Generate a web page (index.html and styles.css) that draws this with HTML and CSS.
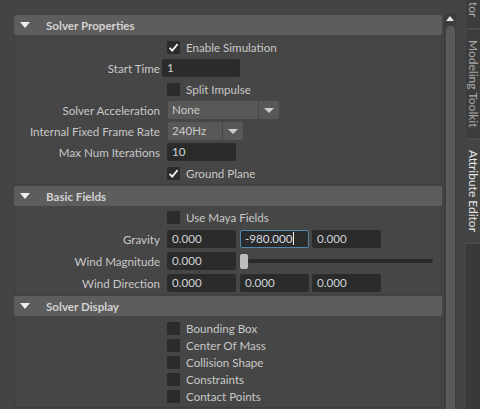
FILE: index.html
```html
<!DOCTYPE html>
<html lang="en">
<head>
    <meta charset="UTF-8">
    <title>Attribute Editor - Solver</title>
    <link rel="stylesheet" href="styles.css">
</head>
<body>
    <div class="workspace">
        <div class="editor">
            <section class="frame">
                <div class="frame-header"><span class="caret"></span>Solver Properties</div>
                <div class="frame-body">
                    <div class="row">
                        <span class="label"></span>
                        <div class="check on"><span class="box"><svg viewBox="0 0 13 13"><path d="M2.6 6.8 L5.2 9.6 L10.6 3.2"/></svg></span>Enable Simulation</div>
                    </div>
                    <div class="row">
                        <span class="label">Start Time</span>
                        <div class="field wide">1</div>
                    </div>
                    <div class="row">
                        <span class="label"></span>
                        <div class="check"><span class="box"></span>Split Impulse</div>
                    </div>
                    <div class="row">
                        <span class="label">Solver Acceleration</span>
                        <div class="combo">
                            <span class="combo-value long">None</span>
                            <span class="combo-arrow"></span>
                        </div>
                    </div>
                    <div class="row">
                        <span class="label">Internal Fixed Frame Rate</span>
                        <div class="combo">
                            <span class="combo-value">240Hz</span>
                            <span class="combo-arrow"></span>
                        </div>
                    </div>
                    <div class="row">
                        <span class="label">Max Num Iterations</span>
                        <div class="field">10</div>
                    </div>
                    <div class="row">
                        <span class="label"></span>
                        <div class="check on"><span class="box"><svg viewBox="0 0 13 13"><path d="M2.6 6.8 L5.2 9.6 L10.6 3.2"/></svg></span>Ground Plane</div>
                    </div>
                </div>
            </section>

            <section class="frame">
                <div class="frame-header"><span class="caret"></span>Basic Fields</div>
                <div class="frame-body fields">
                    <div class="row">
                        <span class="label"></span>
                        <div class="check"><span class="box"></span>Use Maya Fields</div>
                    </div>
                    <div class="row">
                        <span class="label">Gravity</span>
                        <div class="group">
                            <div class="field">0.000</div>
                            <div class="field focused">-980.000<span class="cursor"></span></div>
                            <div class="field">0.000</div>
                        </div>
                    </div>
                    <div class="row">
                        <span class="label">Wind Magnitude</span>
                        <div class="group">
                            <div class="field">0.000</div>
                            <div class="slider">
                                <span class="slider-thumb"></span>
                                <span class="slider-track"></span>
                            </div>
                        </div>
                    </div>
                    <div class="row">
                        <span class="label">Wind Direction</span>
                        <div class="group">
                            <div class="field">0.000</div>
                            <div class="field">0.000</div>
                            <div class="field">0.000</div>
                        </div>
                    </div>
                </div>
            </section>

            <section class="frame">
                <div class="frame-header"><span class="caret"></span>Solver Display</div>
                <div class="frame-body display">
                    <div class="row short">
                        <span class="label"></span>
                        <div class="check"><span class="box"></span>Bounding Box</div>
                    </div>
                    <div class="row short">
                        <span class="label"></span>
                        <div class="check"><span class="box"></span>Center Of Mass</div>
                    </div>
                    <div class="row short">
                        <span class="label"></span>
                        <div class="check"><span class="box"></span>Collision Shape</div>
                    </div>
                    <div class="row short">
                        <span class="label"></span>
                        <div class="check"><span class="box"></span>Constraints</div>
                    </div>
                    <div class="row short">
                        <span class="label"></span>
                        <div class="check"><span class="box"></span>Contact Points</div>
                    </div>
                </div>
            </section>
        </div>

        <div class="scrollbar">
            <span class="scroll-up"></span>
            <span class="scroll-thumb"></span>
        </div>

        <div class="dock">
            <div class="tab clipped"><span>tor</span></div>
            <div class="tab"><span>Modeling Toolkit</span></div>
            <div class="tab active"><span>Attribute Editor</span></div>
            <div class="tab-rest"></div>
        </div>
    </div>
</body>
</html>
```

FILE: styles.css
```css
* {
    margin: 0;
    padding: 0;
    box-sizing: border-box;
}

body {
    font-family: 'Lato', 'Liberation Sans', sans-serif;
    font-size: 11.6px;
    background: #444444;
    color: #c8c8c8;
    height: 409px;
    overflow: hidden;
}

.workspace {
    display: flex;
    height: 409px;
}

.editor {
    width: 442px;
    padding: 15px 0 0 14px;
}

.frame + .frame {
    margin-top: 1px;
}

.frame-header {
    display: flex;
    align-items: center;
    height: 20px;
    background: #5d5d5d;
    border-radius: 2px;
    font-weight: bold;
    color: #d2d2d2;
}

.caret {
    margin: 0 16px 1px 6px;
    border-left: 5px solid transparent;
    border-right: 5px solid transparent;
    border-top: 6px solid #eeeeee;
}

.frame-body {
    display: flex;
    flex-direction: column;
    gap: 3px;
    padding: 3px 0 2px;
    border: 1px solid #3d3d3d;
    border-top: none;
    background: #464646;
}

.frame-body.fields {
    gap: 4px;
    padding: 2px 0 2px;
}

.frame-body.display {
    gap: 0;
    padding: 4px 0 2px;
}

.row {
    display: grid;
    grid-template-columns: 145px 1fr;
    column-gap: 7px;
    align-items: center;
    height: 18px;
}

.row.short {
    height: 17px;
}

.label {
    text-align: right;
    white-space: nowrap;
}

/* checkboxes */
.check {
    display: flex;
    align-items: center;
    gap: 6px;
}

.box {
    display: flex;
    width: 13px;
    height: 13px;
    background: #2b2b2b;
    border-radius: 1px;
}

.box svg {
    width: 13px;
    height: 13px;
}

.box path {
    fill: none;
    stroke: #f2f2f2;
    stroke-width: 1.8;
}

/* text fields */
.field {
    width: 69px;
    height: 18px;
    line-height: 18px;
    padding-left: 5px;
    background: #2b2b2b;
    border-radius: 2px;
    color: #cdd3d8;
}

.field.wide {
    width: 78px;
    margin-left: -5px;
}

.field.focused {
    border: 1px solid #5286ad;
    line-height: 16px;
    padding-left: 4px;
    color: #d8dde2;
}

.cursor {
    display: inline-block;
    width: 1px;
    height: 13px;
    margin-left: 1px;
    vertical-align: -2px;
    background: #f0f0f0;
}

.group {
    display: flex;
    gap: 4px;
}

.group .field + .field + .field {
    margin-left: -1px;
}

/* dropdowns */
.combo {
    display: flex;
    gap: 1px;
    height: 18px;
    margin-left: 1px;
}

.combo-value {
    width: 54px;
    line-height: 18px;
    padding-left: 4px;
    background: #585858;
    border-radius: 2px 0 0 2px;
}

.combo-value.long {
    width: 90px;
}

.combo-arrow {
    display: flex;
    align-items: center;
    justify-content: center;
    width: 20px;
    background: #585858;
    border-radius: 0 2px 2px 0;
}

.combo-arrow::after {
    content: '';
    border-left: 5px solid transparent;
    border-right: 5px solid transparent;
    border-top: 5px solid #cccccc;
}

/* slider */
.slider {
    display: flex;
    align-items: center;
    width: 193px;
}

.slider-thumb {
    width: 8px;
    height: 15px;
    background: #bdbdbd;
    border-radius: 2px;
}

.slider-track {
    flex: 1;
    height: 4px;
    background: #2a2a2a;
    border-radius: 2px;
}

/* scrollbar */
.scrollbar {
    display: flex;
    flex-direction: column;
    align-items: center;
    width: 12px;
    margin: 13px 0 0 2px;
    background: #3d3d3d;
}

.scroll-up {
    margin: 3px 0 5px;
    border-left: 4px solid transparent;
    border-right: 4px solid transparent;
    border-bottom: 5px solid #e6e6e6;
}

.scroll-thumb {
    flex: 1;
    width: 9px;
    background: #5a5a5a;
    border-radius: 4px 4px 0 0;
}

/* side tabs */
.dock {
    display: flex;
    flex-direction: column;
    width: 14px;
    margin-left: 10px;
    gap: 2px;
    background: #4a4a4a;
}

.tab {
    display: flex;
    flex-direction: column;
    align-items: center;
    padding: 10px 0;
    background: #3c3c3c;
    color: #a8a8a8;
    font-size: 12px;
    overflow: hidden;
}

.tab span {
    writing-mode: vertical-rl;
    white-space: nowrap;
    line-height: 14px;
}

.tab.clipped {
    height: 28px;
    justify-content: flex-end;
    padding: 0 0 11px;
}

.tab.active {
    background: #444444;
    color: #e4e4e4;
}

.tab-rest {
    flex: 1;
    background: #393939;
}
```
